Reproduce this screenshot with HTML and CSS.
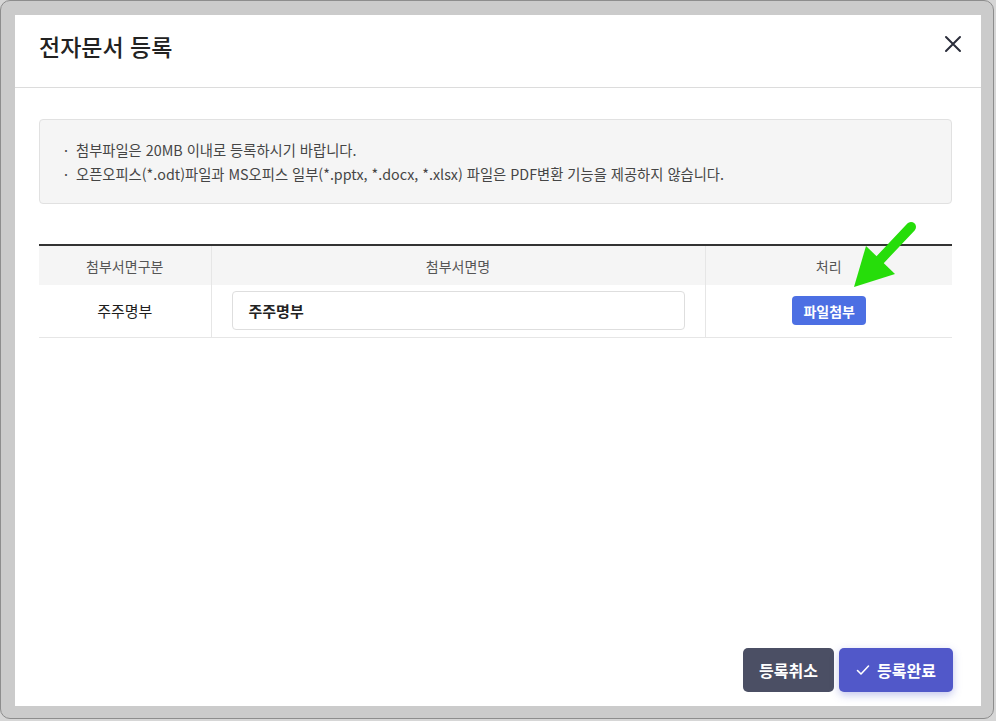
FILE: index.html
```html
<!DOCTYPE html>
<html lang="ko">
<head>
<meta charset="utf-8">
<link rel="stylesheet" href="styles.css">
</head>
<body>
<div class="window">
  <div class="modal">
    <div class="modal-header">
      <h1 class="title">전자문서 등록</h1>
      <button class="close" aria-label="닫기">
        <svg width="18" height="18" viewBox="0 0 18 18"><path d="M2 2 L16 16 M16 2 L2 16" stroke="#2b2e3b" stroke-width="2" stroke-linecap="round"/></svg>
      </button>
    </div>
    <div class="modal-body">
      <div class="notice">
        <p><span class="dot">·</span>첨부파일은 20MB 이내로 등록하시기 바랍니다.</p>
        <p><span class="dot">·</span>오픈오피스(*.odt)파일과 MS오피스 일부(*.pptx, *.docx, *.xlsx) 파일은 PDF변환 기능을 제공하지 않습니다.</p>
      </div>
      <table class="grid">
        <colgroup><col class="c1"><col class="c2"><col class="c3"></colgroup>
        <thead>
          <tr><th>첨부서면구분</th><th>첨부서면명</th><th>처리</th></tr>
        </thead>
        <tbody>
          <tr>
            <td class="kind">주주명부</td>
            <td class="input-cell"><div class="input">주주명부</div></td>
            <td><button class="attach">파일첨부</button></td>
          </tr>
        </tbody>
      </table>
      <div class="spacer"></div>
      <div class="footer">
        <button class="btn cancel">등록취소</button>
        <button class="btn submit"><svg width="14" height="12" viewBox="0 0 14 12"><path d="M1.5 6.5 L5 10 L12.5 2" fill="none" stroke="#fff" stroke-width="1.6" stroke-linecap="round" stroke-linejoin="round"/></svg>등록완료</button>
      </div>
    </div>
  </div>
  <svg class="arrow" width="80" height="80" viewBox="0 0 80 80">
    <line x1="67" y1="6" x2="33" y2="42" stroke="#26dd0a" stroke-width="10" stroke-linecap="round"/>
    <polygon points="10,66 22,25 51,53" fill="#26dd0a"/>
  </svg>
</div>
</body>
</html>
```
FILE: styles.css
```css
* { box-sizing: border-box; }
html, body { margin: 0; padding: 0; }
body {
  width: 996px;
  height: 721px;
  background: #d6d6d6;
  font-family: "Noto Sans CJK KR", "Noto Sans", sans-serif;
  overflow: hidden;
}
.window {
  position: relative;
  width: 994px;
  height: 719px;
  background: #cbcbcb;
  border: 1px solid #8d8d8d;
  border-radius: 10px;
  padding: 14px 12px 12px 14px;
}
.modal {
  width: 966px;
  height: 691px;
  background: #fff;
  display: flex;
  flex-direction: column;
}
.modal-header {
  height: 73px;
  border-bottom: 1px solid #dcdcdc;
  display: flex;
  align-items: flex-start;
  justify-content: space-between;
  padding: 18px 18px 0 24px;
}
.title {
  margin: 0;
  font-size: 23px;
  font-weight: 500;
  color: #222;
  line-height: 26px;
}
.close {
  background: none;
  border: 0;
  padding: 0;
  width: 20px;
  height: 20px;
  display: flex;
  align-items: center;
  justify-content: center;
  margin-top: 1px;
}
.modal-body {
  flex: 1;
  display: flex;
  flex-direction: column;
  padding: 31px 29px 14px 24px;
}
.notice {
  background: #f5f5f5;
  border: 1px solid #e1e1e1;
  border-radius: 4px;
  height: 85px;
  padding: 18px 26px 0 24px;
}
.notice p {
  margin: 0;
  font-size: 14.3px;
  line-height: 24px;
  color: #454545;
}
.dot {
  display: inline-block;
  width: 12px;
}
.grid {
  margin-top: 40px;
  width: 913px;
  border-collapse: collapse;
  border-top: 2px solid #333;
  table-layout: fixed;
}
.c1 { width: 172px; }
.c2 { width: 494px; }
.c3 { width: 247px; }
.grid th {
  height: 40px;
  background: #f5f5f5;
  font-weight: 400;
  font-size: 14px;
  color: #555;
  border-left: 1px solid #e6e6e6;
  padding: 0;
}
.grid th:first-child, .grid td:first-child { border-left: 0; }
.grid td {
  height: 52px;
  text-align: center;
  font-size: 15px;
  color: #222;
  border-left: 1px solid #e6e6e6;
  border-bottom: 1px solid #e6e6e6;
  padding: 0;
}
.grid td.kind { font-weight: 400; color: #1e1e1e; }
.grid td.input-cell { padding: 0 20px 0 20px; }
.input {
  height: 39px;
  border: 1px solid #dedede;
  border-radius: 4px;
  text-align: left;
  padding: 0 16px;
  line-height: 37px;
  font-weight: 700;
  font-size: 15px;
  color: #222;
}
.attach {
  font-family: inherit;
  background: #4c6fe3;
  color: #fff;
  border: 0;
  border-radius: 4px;
  height: 29px;
  width: 74px;
  font-size: 14px;
  font-weight: 700;
  padding: 0;
  margin-left: 1px;
}
.spacer { flex: 1; }
.footer {
  display: flex;
  justify-content: flex-end;
  gap: 5px;
  margin-right: -1px;
}
.btn {
  font-family: inherit;
  height: 44px;
  border: 0;
  border-radius: 5px;
  color: #fff;
  font-size: 16px;
  font-weight: 700;
  display: flex;
  align-items: center;
  justify-content: center;
  gap: 7px;
}
.cancel { width: 91px; background: #4b4f64; }
.submit {
  width: 114px;
  background: #5158c9;
  box-shadow: 0 3px 8px rgba(80, 88, 200, 0.35);
}
.arrow {
  position: absolute;
  left: 843px;
  top: 220px;
}
```
